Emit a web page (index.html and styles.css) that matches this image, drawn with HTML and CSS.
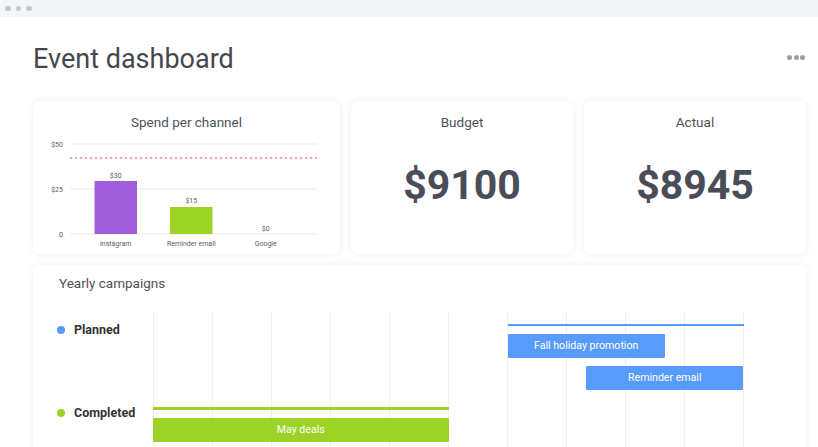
FILE: index.html
```html
<!DOCTYPE html>
<html lang="en">
<head>
    <meta charset="UTF-8">
    <meta name="viewport" content="width=device-width, initial-scale=1.0">
    <title>Event dashboard</title>
    <link rel="stylesheet" href="styles.css">
</head>
<body>
    <!-- window chrome -->
    <div class="window-bar">
        <span class="window-dot"></span>
        <span class="window-dot"></span>
        <span class="window-dot"></span>
    </div>

    <main class="page">
        <header class="page-head">
            <h1>Event dashboard</h1>
            <div class="more" aria-label="More">
                <span></span><span></span><span></span>
            </div>
        </header>

        <section class="top-row">
            <div class="card chart-card">
                <h2 class="card-title">Spend per channel</h2>
                <svg class="chart" width="307" height="124" viewBox="0 0 307 124">
                    <g class="grid">
                        <line x1="37" y1="14" x2="284" y2="14"/>
                        <line x1="37" y1="59" x2="284" y2="59"/>
                        <line x1="37" y1="104" x2="284" y2="104"/>
                    </g>
                    <g class="axis-label">
                        <text x="30" y="16.5">$50</text>
                        <text x="30" y="61.5">$25</text>
                        <text x="30" y="106.5">0</text>
                    </g>
                    <line class="goal" x1="37" y1="28" x2="284" y2="28"/>
                    <rect x="61.5" y="51" width="42.5" height="53" fill="#a25ddc"/>
                    <rect x="137" y="77" width="42.5" height="27" fill="#9cd326"/>
                    <g class="value-label">
                        <text x="82.7" y="47.5">$30</text>
                        <text x="158.3" y="73">$15</text>
                        <text x="232.7" y="100.5">$0</text>
                        <text x="82.7" y="115.5">Instagram</text>
                        <text x="158.3" y="115.5">Reminder email</text>
                        <text x="232.7" y="115.5">Google</text>
                    </g>
                </svg>
            </div>

            <div class="card number-card">
                <h2 class="card-title">Budget</h2>
                <div class="big-number">$9100</div>
            </div>

            <div class="card number-card">
                <h2 class="card-title">Actual</h2>
                <div class="big-number">$8945</div>
            </div>
        </section>

        <section class="card timeline-card">
            <h2 class="timeline-title">Yearly campaigns</h2>

            <div class="gantt">
                <div class="group-label planned"><span class="legend-dot blue"></span>Planned</div>
                <div class="track planned">
                    <div class="summary blue" style="margin-left: 60%; width: 40%"></div>
                    <div class="bar blue" style="margin-left: 60%; width: 26.6%">Fall holiday promotion</div>
                    <div class="bar blue" style="margin-left: 73.3%; width: 26.6%">Reminder email</div>
                </div>

                <div class="group-label completed"><span class="legend-dot green"></span>Completed</div>
                <div class="track completed">
                    <div class="summary green" style="margin-left: 0; width: 50%"></div>
                    <div class="bar green" style="margin-left: 0; width: 50%">May deals</div>
                </div>
            </div>
        </section>
    </main>
</body>
</html>
```

FILE: styles.css
```css
body {
    margin: 0;
    font-family: Roboto, 'Noto Sans', sans-serif;
    background: #fff;
    color: #4a4c55;
}

/* window chrome */
.window-bar {
    height: 17px;
    background: #f4f5f7;
    display: flex;
    align-items: center;
    gap: 5px;
    padding-left: 5px;
    border-top-left-radius: 4px;
}

.window-dot {
    width: 5.5px;
    height: 5.5px;
    border-radius: 50%;
    background: #c6c8d2;
}

.page {
    padding: 25px 12px 0 33px;
}

.page-head {
    display: flex;
    justify-content: space-between;
    align-items: center;
    margin-bottom: 25px;
}

.page-head h1 {
    margin: 0;
    font-size: 27px;
    line-height: 34px;
    font-weight: 400;
    color: #45474f;
}

.more {
    display: flex;
    gap: 1.5px;
    padding-bottom: 4px;
    margin-right: 1px;
}

.more span {
    width: 5px;
    height: 5px;
    border-radius: 50%;
    background: #9a9cab;
}

/* cards */
.card {
    background: #fff;
    border-radius: 7px;
    box-shadow: 0 0 8px rgba(0, 0, 0, 0.07);
}

.top-row {
    display: grid;
    grid-template-columns: 307px 1fr 1fr;
    gap: 11px;
    height: 153px;
    margin-bottom: 11px;
}

.card-title {
    margin: 0;
    padding-top: 13px;
    font-size: 13.5px;
    line-height: 17px;
    font-weight: 400;
    text-align: center;
    color: #4f515b;
}

.chart {
    display: block;
    margin-top: -1px;
}

.chart .grid line {
    stroke: #e9ebf0;
    stroke-width: 1;
}

.chart .goal {
    stroke: #f0476a;
    stroke-width: 1.2;
    stroke-dasharray: 2 3;
}

.chart text {
    font-family: Roboto, sans-serif;
    font-size: 7px;
    fill: #5a5c66;
}

.chart .axis-label text {
    text-anchor: end;
}

.chart .value-label text {
    text-anchor: middle;
}

.number-card {
    display: flex;
    flex-direction: column;
    align-items: center;
}

.big-number {
    margin-top: 30px;
    font-size: 41px;
    line-height: 48px;
    font-weight: 700;
    color: #4a4c57;
}

/* yearly campaigns */
.timeline-card {
    padding: 10px 0 20px 26px;
    border-bottom-left-radius: 0;
    border-bottom-right-radius: 0;
}

.timeline-title {
    margin: 0 0 20px;
    font-size: 13.5px;
    line-height: 17px;
    font-weight: 400;
    color: #4f515b;
}

.gantt {
    display: grid;
    grid-template-columns: 94px 591px;
    background-image: repeating-linear-gradient(90deg, #eef0f3 0 1px, transparent 1px 59px);
    background-size: 591px 100%;
    background-position: 94px 0;
    background-repeat: no-repeat;
    padding-bottom: 30px;
}

.group-label {
    display: flex;
    align-items: center;
    height: 15px;
    font-size: 12.5px;
    font-weight: 700;
    color: #333;
}

.group-label.planned {
    margin-top: 10px;
}

.group-label.completed {
    margin-top: 15px;
}

.legend-dot {
    width: 8px;
    height: 8px;
    border-radius: 50%;
    margin: 0 9px 0 -2px;
}

.track {
    display: flex;
    flex-direction: column;
}

.track.planned {
    padding-top: 12px;
}

.track.completed {
    padding-top: 17px;
}

.summary {
    height: 2px;
    margin-bottom: 8px;
}

.track.completed .summary {
    height: 3px;
}

.bar {
    height: 24px;
    line-height: 24px;
    font-size: 10.6px;
    color: #fff;
    text-align: center;
    white-space: nowrap;
    border-radius: 1px;
}

.bar + .bar {
    margin-top: 8px;
}

.blue {
    background: #579bfc;
}

.green {
    background: #9cd326;
}
```
